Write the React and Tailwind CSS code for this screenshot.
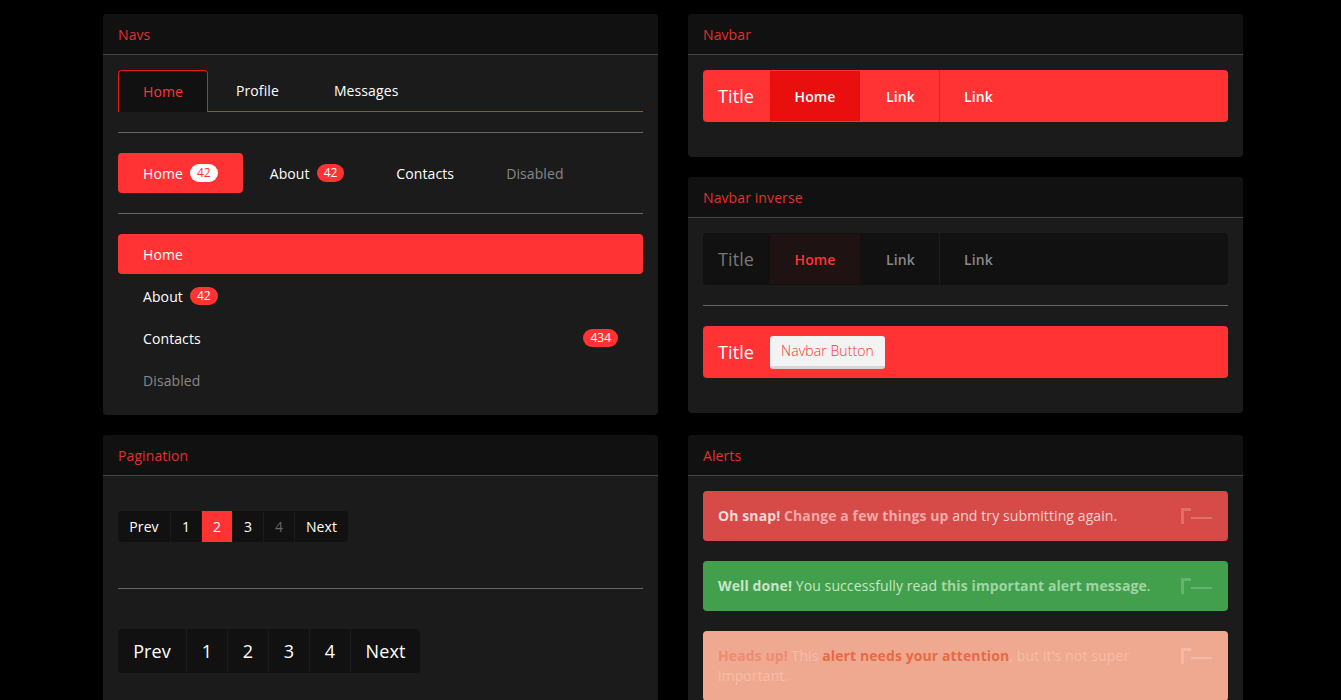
import React from 'react';

const Panel = ({ title, children, className = '' }) => (
  <div className={`rounded-[4px] overflow-hidden bg-[#1b1b1b] ${className}`}>
    <div className="h-[41px] px-[15px] flex items-center bg-[#111111] border-b border-[#444444] text-[14px] text-[#e0302f]">
      {title}
    </div>
    <div className="p-[15px]">{children}</div>
  </div>
);

const Hr = () => <div className="h-px bg-[#666666] my-[20px]" />;

const Badge = ({ children, light }) => (
  <span
    className={`inline-flex items-center h-[18px] px-[7px] rounded-full text-[12px] leading-none tracking-normal ${
      light ? 'bg-white text-[#ff3333]' : 'bg-[#ff3333] text-white'
    }`}
  >
    {children}
  </span>
);

const CloseIcon = () => (
  <svg width="31" height="16" viewBox="0 0 31 16" className="shrink-0 opacity-20">
    <path d="M0 0h10v3H3v13H0z" fill="#ffffff" />
    <path d="M10 10h21" stroke="#ffffff" strokeWidth="2" />
  </svg>
);

const Navs = () => (
  <Panel title="Navs">
    {/* tabs */}
    <div>
      <div className="flex h-[41px]">
        <div className="relative z-10 w-[90px] h-[42px] flex items-center justify-center bg-[#111111] border border-b-0 border-[#e81a1a] rounded-t-[4px] text-[#ff3333]">
          Home
        </div>
        <div className="ml-[2px] px-[26px] flex items-center text-white">Profile</div>
        <div className="ml-[2px] px-[27px] flex items-center text-white">Messages</div>
      </div>
      <div className="h-px bg-[#ff2222]" />
    </div>
    <Hr />
    {/* pills */}
    <div className="flex gap-[2px]">
      <div className="h-[40px] px-[25px] flex items-center gap-[7px] rounded-[4px] bg-[#ff3333] text-white">
        Home <Badge light>42</Badge>
      </div>
      <div className="h-[40px] px-[25px] flex items-center gap-[7px] text-white">
        About <Badge>42</Badge>
      </div>
      <div className="h-[40px] px-[25px] flex items-center text-white">Contacts</div>
      <div className="h-[40px] px-[25px] flex items-center text-[#888888]">Disabled</div>
    </div>
    <Hr />
    {/* stacked */}
    <div className="flex flex-col gap-[2px]">
      <div className="h-[40px] px-[25px] flex items-center rounded-[4px] bg-[#ff3333] text-white">Home</div>
      <div className="h-[40px] px-[25px] flex items-center gap-[7px] text-white">
        About <Badge>42</Badge>
      </div>
      <div className="h-[40px] px-[25px] flex items-center justify-between text-white">
        Contacts <Badge>434</Badge>
      </div>
      <div className="h-[40px] px-[25px] flex items-center text-[#888888]">Disabled</div>
    </div>
  </Panel>
);

const NavbarBar = ({ inverse }) => (
  <div className={`h-[52px] rounded-[4px] flex items-stretch ${inverse ? 'bg-[#111111]' : 'bg-[#ff3333]'}`}>
    <div
      className={`w-[67px] pl-[15px] flex items-center text-[18px] ${inverse ? 'text-[#777777]' : 'text-white'}`}
    >
      Title
    </div>
    <div
      className={`w-[90px] my-px flex items-center justify-center font-semibold ${
        inverse ? 'bg-[#1e1212] text-[#ff3333]' : 'bg-[#ea0f0f] text-white'
      }`}
    >
      Home
    </div>
    <div
      className={`w-[80px] pl-[26px] flex items-center font-semibold border-r ${
        inverse ? 'text-[#888888] border-[#1c1c1c]' : 'text-white border-[#e61f1f]'
      }`}
    >
      Link
    </div>
    <div className={`pl-[24px] flex items-center font-semibold ${inverse ? 'text-[#888888]' : 'text-white'}`}>
      Link
    </div>
  </div>
);

const Pager = ({ large }) => {
  const items = ['Prev', '1', '2', '3', '4', 'Next'];
  const widthOf = (it) => {
    if (large) return it === 'Prev' ? 'w-[68px]' : it === 'Next' ? 'w-[70px]' : 'w-[41px]';
    return it === 'Prev' ? 'w-[52px]' : it === 'Next' ? 'w-[54px]' : 'w-[31px]';
  };
  return (
    <div className={`inline-flex rounded-[4px] overflow-hidden bg-[#111111] ${large ? 'h-[44px] text-[18px]' : 'h-[31px]'}`}>
      {items.map((it, i) => {
        const active = !large && it === '2';
        const disabled = !large && it === '4';
        return (
          <div
            key={i}
            className={`flex items-center justify-center ${i > 0 ? 'border-l border-[#1b1b1b]' : ''} ${widthOf(it)} ${
              active ? 'bg-[#ff3333] text-white' : disabled ? 'text-[#666666]' : 'text-white'
            }`}
          >
            {it}
          </div>
        );
      })}
    </div>
  );
};

const Alert = ({ className, children }) => (
  <div className={`rounded-[4px] pl-[15px] pr-[16px] py-[15px] flex items-start justify-between ${className}`}>
    <div className="max-w-[442px] leading-[20px]">{children}</div>
    <div className="pt-[2px]">
      <CloseIcon />
    </div>
  </div>
);

export default function App() {
  return (
    <div
      className="min-h-screen bg-black text-[14px] tracking-[0.1px]"
      style={{ fontFamily: '"Open Sans", "Liberation Sans", sans-serif' }}
    >
      <div className="ml-[103px] w-[1140px] pt-[14px] grid grid-cols-2 gap-x-[30px] gap-y-[20px] items-start">
        <Navs />
        <div className="flex flex-col gap-[20px]">
          <Panel title="Navbar">
            <div className="mb-[20px]">
              <NavbarBar />
            </div>
          </Panel>
          <Panel title="Navbar inverse">
            <NavbarBar inverse />
            <Hr />
            <div className="mb-[20px] h-[52px] rounded-[4px] bg-[#ff3333] flex items-center">
              <div className="w-[67px] pl-[15px] text-[18px] text-white">Title</div>
              <div className="h-[33px] w-[115px] flex items-center justify-center rounded-[3px] bg-[#f3f3f3] text-[#ff3333] font-light border-b-[3px] border-[#d6d6d6]">
                Navbar Button
              </div>
            </div>
          </Panel>
        </div>
        <Panel title="Pagination">
          <div className="pt-[20px] pb-[46px]">
            <Pager />
          </div>
          <div className="h-px bg-[#666666]" />
          <div className="pt-[40px] pb-[40px]">
            <Pager large />
          </div>
        </Panel>
        <Panel title="Alerts">
          <div className="flex flex-col gap-[20px]">
            <Alert className="bg-[#d64b48] text-[#f7d0cf]">
              <b className="text-[#f6dada]">Oh snap!</b>{' '}
              <b className="text-[#f2a9a7]">Change a few things up</b> and try submitting again.
            </Alert>
            <Alert className="bg-[#429f4b] text-[#c6e6c8]">
              <b className="text-[#c6e6c8]">Well done!</b> You successfully read{' '}
              <b className="text-[#9fd6a4]">this important alert message</b>.
            </Alert>
            <Alert className="bg-[#f0a991] text-[#f6bda9]">
              <b className="text-[#ec8c70]">Heads up!</b> This{' '}
              <b className="text-[#e76a44]">alert needs your attention</b>, but it's not super important.
            </Alert>
          </div>
        </Panel>
      </div>
    </div>
  );
}
